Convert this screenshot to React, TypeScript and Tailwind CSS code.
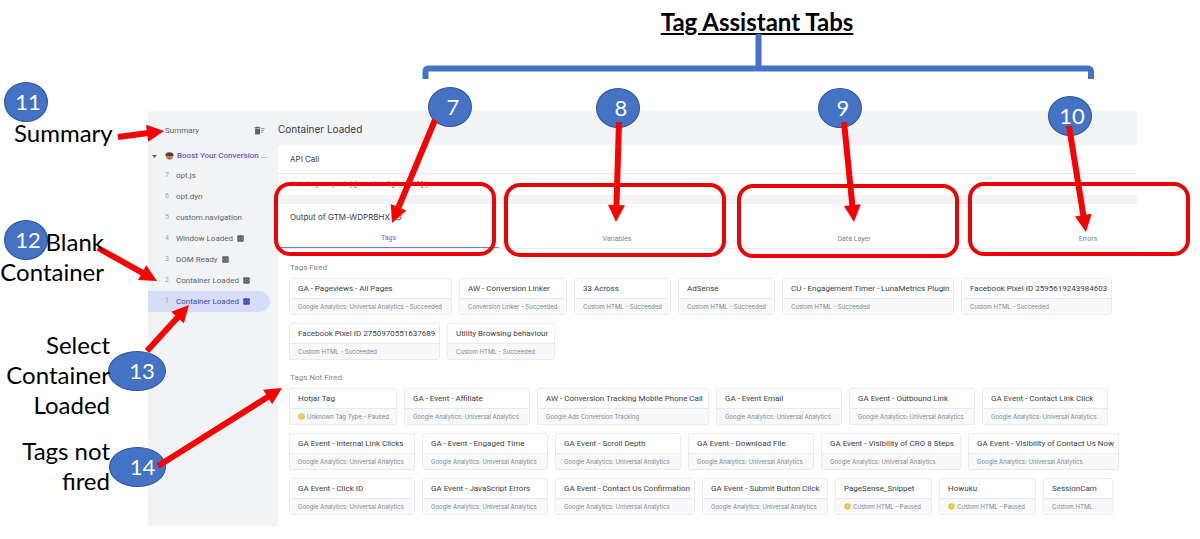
import type { ReactNode } from "react";

type Tag = { name: string; meta: string; width: string; paused?: boolean };
type Step = { n: number; label: string; api?: boolean; active?: boolean };

const UA = "Google Analytics: Universal Analytics";

const W = {
  xs: "w-[70px]",
  sm: "w-[97px]",
  md: "w-[108px]",
  base: "w-[126px]",
  lg: "w-[140px]",
  xl: "w-[151px]",
  xxl: "w-[163px]",
  wide: "w-[172px]",
};

const fired: Tag[][] = [
  [
    { name: "GA - Pageviews - All Pages", meta: `${UA} - Succeeded`, width: W.xxl },
    { name: "AW - Conversion Linker", meta: "Conversion Linker - Succeeded", width: W.md },
    { name: "33 Across", meta: "Custom HTML - Succeeded", width: W.sm },
    { name: "AdSense", meta: "Custom HTML - Succeeded", width: W.sm },
    { name: "CU - Engagement Timer - LunaMetrics Plugin", meta: "Custom HTML - Succeeded", width: W.wide },
    { name: "Facebook Pixel ID 2595619243984603", meta: "Custom HTML - Succeeded", width: W.xl },
  ],
  [
    { name: "Facebook Pixel ID 2750970551637689", meta: "Custom HTML - Succeeded", width: W.xl },
    { name: "Utility Browsing behaviour", meta: "Custom HTML - Succeeded", width: W.md },
  ],
];

const notFired: Tag[][] = [
  [
    { name: "Hotjar Tag", meta: "Unknown Tag Type - Paused", width: W.md, paused: true },
    { name: "GA - Event - Affiliate", meta: UA, width: W.base },
    { name: "AW - Conversion Tracking Mobile Phone Call", meta: "Google Ads Conversion Tracking", width: W.wide },
    { name: "GA - Event Email", meta: UA, width: W.base },
    { name: "GA Event - Outbound Link", meta: UA, width: W.base },
    { name: "GA Event - Contact Link Click", meta: UA, width: W.base },
  ],
  [
    { name: "GA Event - Internal Link Clicks", meta: UA, width: W.base },
    { name: "GA - Event - Engaged Time", meta: UA, width: W.base },
    { name: "GA Event - Scroll Depth", meta: UA, width: W.base },
    { name: "GA Event - Download File", meta: UA, width: W.base },
    { name: "GA Event - Visibility of CRO 8 Steps", meta: UA, width: W.lg },
    { name: "GA Event - Visibility of Contact Us Now", meta: UA, width: W.xl },
  ],
  [
    { name: "GA Event - Click ID", meta: UA, width: W.base },
    { name: "GA Event - JavaScript Errors", meta: UA, width: W.base },
    { name: "GA Event - Contact Us Confirmation", meta: UA, width: W.lg },
    { name: "GA Event - Submit Button Click", meta: UA, width: W.base },
    { name: "PageSense_Snippet", meta: "Custom HTML - Paused", width: W.sm, paused: true },
    { name: "Howuku", meta: "Custom HTML - Paused", width: W.sm, paused: true },
    { name: "SessionCam", meta: "Custom HTML", width: W.xs },
  ],
];

const steps: Step[] = [
  { n: 7, label: "opt.js" },
  { n: 6, label: "opt.dyn" },
  { n: 5, label: "custom.navigation" },
  { n: 4, label: "Window Loaded", api: true },
  { n: 3, label: "DOM Ready", api: true },
  { n: 2, label: "Container Loaded", api: true },
  { n: 1, label: "Container Loaded", api: true, active: true },
];

function PausedIcon() {
  return (
    <svg viewBox="0 0 14 14" className="size-[7px] shrink-0" aria-hidden="true">
      <circle cx="7" cy="7" r="6.5" fill="#efc63c" />
      <circle cx="7" cy="7" r="3.4" fill="#f6dc7c" />
      <path d="M5.6 4.8v4.4M8.4 4.8v4.4" stroke="#e3b321" strokeWidth="1.2" />
    </svg>
  );
}

function ApiIcon() {
  return (
    <svg viewBox="0 0 14 14" className="size-[7px] shrink-0" aria-hidden="true">
      <rect x="0.5" y="0.5" width="13" height="13" rx="2" fill="currentColor" />
      <path d="M5.4 4.6 3 7l2.4 2.4M8.6 4.6 11 7 8.6 9.4" fill="none" stroke="#c4c7cb" strokeWidth="1" />
    </svg>
  );
}

function ClearIcon() {
  return (
    <svg viewBox="0 0 22 18" className="h-[9px] w-[11px]" aria-hidden="true">
      <path d="M1 2.5h3.2L5.2 1h3.6l1 1.5H13v2H1zM2 5.5h10V15a2 2 0 0 1-2 2H4a2 2 0 0 1-2-2z" fill="#5f6368" />
      <path d="M14 5h7M14 9h6M14 13h3.5" stroke="#8b8f93" strokeWidth="1.8" />
    </svg>
  );
}

function FaceIcon() {
  return (
    <svg viewBox="0 0 18 16" className="h-2 w-[9px] shrink-0" aria-hidden="true">
      <ellipse cx="9" cy="9" rx="7" ry="6.5" fill="#d58a5c" />
      <path d="M0.5 7C1 2.5 4.5 0.5 9 0.5S17 2.5 17.5 7c-4 1.6-13 1.6-17 0z" fill="#5a3a32" />
      <path d="M4 8.5h4v2.5H4zM10 8.5h4v2.5h-4z" fill="#fff" stroke="#4a302a" strokeWidth="0.8" />
      <path d="M6.5 13h5" stroke="#8f2f22" strokeWidth="1.2" />
    </svg>
  );
}

function TagCard({ tag }: { tag: Tag }) {
  return (
    <li
      className={`h-[37px] shrink-0 overflow-hidden rounded-[3px] border border-[#e8eaed] bg-white whitespace-nowrap ${tag.width}`}
    >
      <div className="h-[19px] pl-2 text-[8px] leading-[19px] text-[#3c4043]">{tag.name}</div>
      <div className="flex h-[16px] items-center gap-[2px] border-t border-[#e8eaed] bg-[#f8f9fa] pl-2 font-['Inter',sans-serif] text-[6px] leading-[14px] text-[#80868b]">
        {tag.paused && <PausedIcon />}
        {tag.meta}
      </div>
    </li>
  );
}

function TagGroup({ title, rows }: { title: string; rows: Tag[][] }) {
  return (
    <section>
      <h3 className="pl-px text-[8px] leading-[10px] text-[#80868b]">{title}</h3>
      <div className="mt-[5px] flex flex-col gap-2">
        {rows.map((row, i) => (
          <ul key={i} className="flex gap-[7px]">
            {row.map((tag) => (
              <TagCard key={tag.name} tag={tag} />
            ))}
          </ul>
        ))}
      </div>
    </section>
  );
}

function Badge({ place, children }: { place: string; children: ReactNode }) {
  return (
    <div
      className={`absolute flex h-10 items-center justify-center rounded-[50%] border border-[#2f5597] bg-[#4472c4] text-[22px] leading-none text-white ${place}`}
    >
      {children}
    </div>
  );
}

function Callout({ place }: { place: string }) {
  return <div className={`absolute h-[74px] w-[222px] rounded-[16px] border-4 border-[#e90505] ${place}`} />;
}

function Arrow({ x1, y1, x2, y2 }: { x1: number; y1: number; x2: number; y2: number }) {
  const len = Math.hypot(x2 - x1, y2 - y1);
  const ux = (x2 - x1) / len;
  const uy = (y2 - y1) / len;
  const bx = x2 - ux * 17;
  const by = y2 - uy * 17;
  return (
    <g>
      <line x1={x1} y1={y1} x2={bx + ux} y2={by + uy} stroke="#fb0000" strokeWidth="6" />
      <polygon
        points={`${x2},${y2} ${bx - uy * 8.5},${by + ux * 8.5} ${bx + uy * 8.5},${by - ux * 8.5}`}
        fill="#fb0000"
      />
    </g>
  );
}

export default function App() {
  return (
    <div className="relative min-h-screen overflow-hidden bg-white font-['Roboto','Liberation_Sans',sans-serif]">
      <header className="flex h-[111px] justify-center pt-2 pl-[314px] font-['Lato',sans-serif]">
        <h1 className="text-[24px] leading-7 font-bold text-black underline decoration-2 underline-offset-2">
          Tag Assistant Tabs
        </h1>
      </header>

      <div className="flex pr-[63px]">
        <aside className="z-10 w-[148px] shrink-0 font-['Lato',sans-serif] text-[24px] leading-[30px] text-black">
          <p className="pt-[7px] pl-[14px]">Summary</p>
          <p className="mt-[79px] w-[104px] text-right">
            Blank
            <br />
            Container
          </p>
          <p className="mt-[43px] w-[110px] text-right">
            Select
            <br />
            Container
            <br />
            Loaded
          </p>
          <p className="mt-4 w-[110px] text-right">
            Tags not
            <br />
            fired
          </p>
        </aside>

        <div className="flex h-[415px] min-w-0 flex-1 bg-[#f1f3f4]">
          <nav className="w-[130px] shrink-0 text-[8px] text-[#5f6368]">
            <div className="flex h-[39px] items-center justify-between pr-[13px] pl-[17px]">
              <a href="#summary">Summary</a>
              <button type="button" aria-label="Clear">
                <ClearIcon />
              </button>
            </div>
            <div className="flex h-[12px] items-center text-[#6a5acd]">
              <svg viewBox="0 0 10 6" className="mr-2 ml-1 h-[3px] w-[5px]" aria-hidden="true">
                <path d="M0 0h10L5 6z" fill="#5f6368" />
              </svg>
              <FaceIcon />
              <span className="ml-[3px] font-medium whitespace-nowrap">Boost Your Conversion ...</span>
            </div>
            <ol className="mt-[3px]">
              {steps.map((s) => (
                <li key={s.n}>
                  <a
                    href={`#step-${s.n}`}
                    className={
                      s.active
                        ? "mr-2 flex h-[21px] items-center rounded-r-full bg-[#d6ddf8] text-[#4746b0]"
                        : "mr-2 flex h-[21px] items-center"
                    }
                  >
                    <span className="w-[28px] pl-[17px] text-[7px] text-[#9aa0a6]">{s.n}</span>
                    <span className="mr-1">{s.label}</span>
                    {s.api && <ApiIcon />}
                  </a>
                </li>
              ))}
            </ol>
          </nav>

          <main className="flex min-w-0 flex-1 flex-col">
            <h2 className="h-[34px] font-['Inter',sans-serif] text-[10px] leading-[36px] text-[#3c4043]">
              Container Loaded
            </h2>
            <section className="h-[50px] shrink-0 overflow-hidden rounded-tl-[3px] bg-white text-[#3c4043]">
              <h3 className="h-[29px] border-b border-[#e6e8eb] pl-3 font-['Inter',sans-serif] text-[8px] leading-[28px]">
                API Call
              </h3>
              <p className="pl-3 font-['Liberation_Mono',monospace] text-[7px] leading-[20px] text-[#c5221f]">
                {'dataLayer.push({event: "gtm.js"})'}
              </p>
            </section>
            <section className="mt-[9px] flex min-h-0 flex-1 flex-col bg-white">
              <h3 className="flex h-[26px] items-center gap-1 pl-3 font-['Inter',sans-serif] text-[8px] text-[#3c4043]">
                Output of GTM-WDPRBHX
                <svg viewBox="0 0 14 14" className="size-[8px]" aria-hidden="true">
                  <circle cx="7" cy="7" r="5.5" fill="none" stroke="#3c4043" strokeWidth="1.5" />
                  <path d="M7 4v3.5h3" fill="none" stroke="#3c4043" strokeWidth="1.2" />
                </svg>
              </h3>
              <div
                role="tablist"
                className="grid h-[19px] grid-cols-[221px_236px_238px_1fr] border-b border-[#e8eaed] text-[7px] text-[#80868b]"
              >
                <button type="button" role="tab" aria-selected="true" className="border-b border-[#6f7fe0] text-[#6a5acd]">
                  Tags
                </button>
                <button type="button" role="tab">Variables</button>
                <button type="button" role="tab">Data Layer</button>
                <button type="button" role="tab" className="pl-[66px]">Errors</button>
              </div>
              <div className="flex flex-col gap-[13px] pt-[14px] pl-[11px]">
                <TagGroup title="Tags Fired" rows={fired} />
                <TagGroup title="Tags Not Fired" rows={notFired} />
              </div>
            </section>
          </main>
        </div>
      </div>

      <div className="pointer-events-none absolute inset-0 font-['Lato',sans-serif]">
        <Callout place="left-[274px] top-[182px]" />
        <Callout place="left-[504px] top-[183px]" />
        <Callout place="left-[737px] top-[184px]" />
        <Callout place="left-[968px] top-[182px]" />
        <Badge place="left-[428px] top-[87px] w-11 pl-[6px]">7</Badge>
        <Badge place="left-[596px] top-[88px] w-11 pl-[6px]">8</Badge>
        <Badge place="left-[818px] top-[88px] w-11 pl-[6px]">9</Badge>
        <Badge place="left-[1048px] top-[96px] w-11 pl-1">10</Badge>
        <Badge place="left-1 top-[82px] w-11 pl-1">11</Badge>
        <Badge place="left-1 top-[220px] w-11 pl-1">12</Badge>
        <Badge place="left-[108px] top-[351px] w-[58px] pl-[10px]">13</Badge>
        <Badge place="left-[109px] top-[447px] w-[57px] pl-[10px]">14</Badge>
        <svg width="1200" height="539" className="absolute top-0 left-0" aria-hidden="true">
          <path d="M425.5 79v-7.500q0-3 3-3h659q3 0 3.500 3v7.500M758.500 34v34" fill="none" stroke="#4472c4" strokeWidth="6" />
          <Arrow x1={118} y1={137} x2={164} y2={131} />
          <Arrow x1={98} y1={248} x2={157} y2={281} />
          <Arrow x1={147} y1={351} x2={189} y2={305} />
          <Arrow x1={158} y1={466} x2={282} y2={388} />
          <Arrow x1={435} y1={120} x2={392} y2={223} />
          <Arrow x1={619} y1={122} x2={616} y2={222} />
          <Arrow x1={844} y1={122} x2={854} y2={222} />
          <Arrow x1={1069} y1={126} x2={1086} y2={232} />
        </svg>
      </div>
    </div>
  );
}
